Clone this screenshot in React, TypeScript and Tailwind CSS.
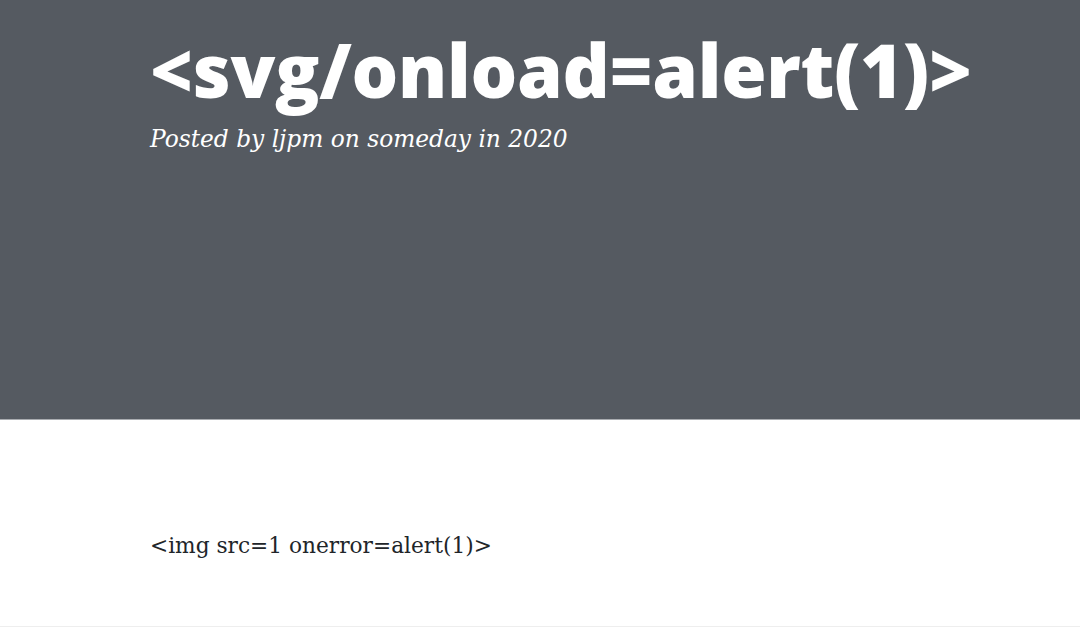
export default function App() {
  return (
    <div className="min-h-[627px] bg-white">
      {/* Masthead */}
      <header className="h-[420px] bg-[#555a61] border-b border-[#a9acb0]">
        <div className="px-[150px] pt-[30px]">
          <h1
            className="text-white text-[73.5px] leading-[80px] font-extrabold tracking-[-0.3px]"
            style={{ fontFamily: '"Open Sans", sans-serif' }}
          >
            {'<svg/onload=alert(1)>'}
          </h1>
          <p
            className="mt-[13px] text-white text-[23.3px] leading-[32px] italic"
            style={{ fontFamily: '"DejaVu Serif", serif' }}
          >
            Posted by ljpm on someday in 2020
          </p>
        </div>
      </header>

      {/* Post body */}
      <article className="px-[150px] pt-[111px] pb-[65px] border-b border-[#eeeeee]">
        <p
          className="text-[#212529] text-[21.7px] leading-[30px]"
          style={{ fontFamily: '"DejaVu Serif", serif' }}
        >
          {'<img src=1 onerror=alert(1)>'}
        </p>
      </article>
    </div>
  );
}
